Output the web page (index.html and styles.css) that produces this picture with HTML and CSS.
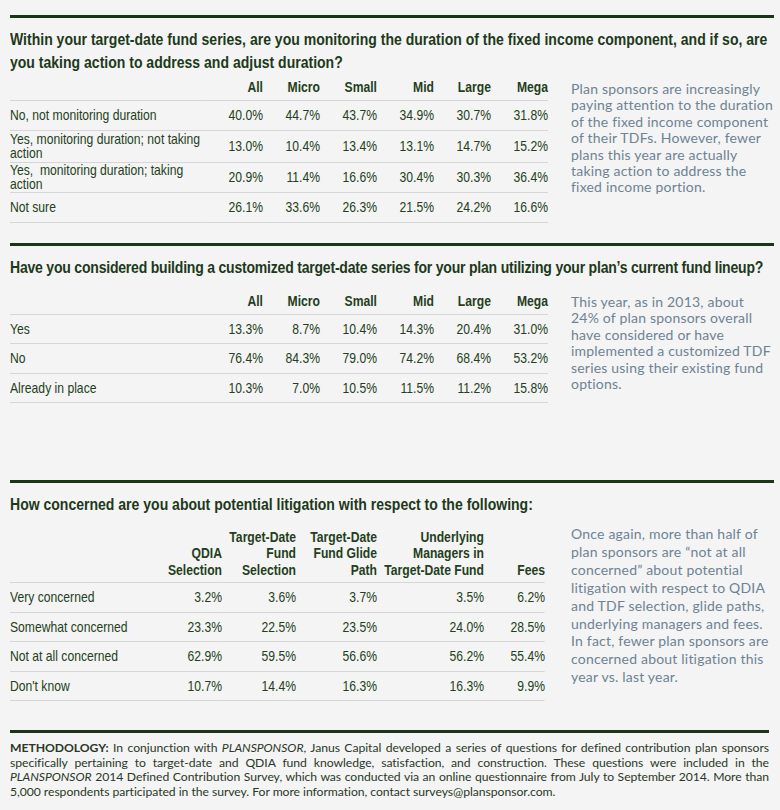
FILE: index.html
```html
<!DOCTYPE html>
<html lang="en">
<head>
<meta charset="utf-8">
<title>Target-date fund survey</title>
<link rel="stylesheet" href="styles.css">
</head>
<body>
<main class="page">

<section class="block block-1">
  <h2 class="question">Within your target-date fund series, are you monitoring the duration of the fixed income component, and if so, are you taking action to address and adjust duration?</h2>
  <div class="content">
    <div class="table-wrap wrap-6">
      <table class="data data-6 data-first">
        <colgroup><col class="col-label"><col class="col-v"><col class="col-v"><col class="col-v"><col class="col-v"><col class="col-v"><col class="col-v"></colgroup>
        <thead>
          <tr><th></th><th>All</th><th>Micro</th><th>Small</th><th>Mid</th><th>Large</th><th>Mega</th></tr>
        </thead>
        <tbody>
          <tr><td>No, not monitoring duration</td><td>40.0%</td><td>44.7%</td><td>43.7%</td><td>34.9%</td><td>30.7%</td><td>31.8%</td></tr>
          <tr class="two-a"><td>Yes, monitoring duration; not taking<br>action</td><td>13.0%</td><td>10.4%</td><td>13.4%</td><td>13.1%</td><td>14.7%</td><td>15.2%</td></tr>
          <tr class="two-b"><td>Yes,&nbsp; monitoring duration; taking<br>action</td><td>20.9%</td><td>11.4%</td><td>16.6%</td><td>30.4%</td><td>30.3%</td><td>36.4%</td></tr>
          <tr><td>Not sure</td><td>26.1%</td><td>33.6%</td><td>26.3%</td><td>21.5%</td><td>24.2%</td><td>16.6%</td></tr>
        </tbody>
      </table>
    </div>
    <p class="note note-1">Plan sponsors are increasingly<br>paying attention to the duration<br>of the fixed income component<br>of their TDFs. However, fewer<br>plans this year are actually<br>taking action to address the<br>fixed income portion.</p>
  </div>
</section>

<section class="block block-2">
  <h2 class="question question-tight">Have you considered building a customized target-date series for your plan utilizing your plan’s current fund lineup?</h2>
  <div class="content">
    <div class="table-wrap wrap-6">
      <table class="data data-6 data-second">
        <colgroup><col class="col-label"><col class="col-v"><col class="col-v"><col class="col-v"><col class="col-v"><col class="col-v"><col class="col-v"></colgroup>
        <thead>
          <tr><th></th><th>All</th><th>Micro</th><th>Small</th><th>Mid</th><th>Large</th><th>Mega</th></tr>
        </thead>
        <tbody>
          <tr><td>Yes</td><td>13.3%</td><td>8.7%</td><td>10.4%</td><td>14.3%</td><td>20.4%</td><td>31.0%</td></tr>
          <tr><td>No</td><td>76.4%</td><td>84.3%</td><td>79.0%</td><td>74.2%</td><td>68.4%</td><td>53.2%</td></tr>
          <tr><td>Already in place</td><td>10.3%</td><td>7.0%</td><td>10.5%</td><td>11.5%</td><td>11.2%</td><td>15.8%</td></tr>
        </tbody>
      </table>
    </div>
    <p class="note note-2">This year, as in 2013, about<br>24% of plan sponsors overall<br>have considered or have<br>implemented a customized TDF<br>series using their existing fund<br>options.</p>
  </div>
</section>

<section class="block block-3">
  <h2 class="question">How concerned are you about potential litigation with respect to the following:</h2>
  <div class="content">
    <div class="table-wrap wrap-5">
      <table class="data data-5">
        <colgroup><col class="c3-label"><col class="c3-qdia"><col class="c3-tdf"><col class="c3-glide"><col class="c3-under"><col class="c3-fees"></colgroup>
        <thead>
          <tr><th></th><th>QDIA<br>Selection</th><th>Target-Date<br>Fund<br>Selection</th><th>Target-Date<br>Fund Glide<br>Path</th><th>Underlying<br>Managers in<br>Target-Date Fund</th><th>Fees</th></tr>
        </thead>
        <tbody>
          <tr><td>Very concerned</td><td>3.2%</td><td>3.6%</td><td>3.7%</td><td>3.5%</td><td>6.2%</td></tr>
          <tr><td>Somewhat concerned</td><td>23.3%</td><td>22.5%</td><td>23.5%</td><td>24.0%</td><td>28.5%</td></tr>
          <tr><td>Not at all concerned</td><td>62.9%</td><td>59.5%</td><td>56.6%</td><td>56.2%</td><td>55.4%</td></tr>
          <tr><td>Don't know</td><td>10.7%</td><td>14.4%</td><td>16.3%</td><td>16.3%</td><td>9.9%</td></tr>
        </tbody>
      </table>
    </div>
    <p class="note note-3">Once again, more than half of<br>plan sponsors are “not at all<br>concerned” about potential<br>litigation with respect to QDIA<br>and TDF selection, glide paths,<br>underlying managers and fees.<br>In fact, fewer plan sponsors are<br>concerned about litigation this<br>year vs. last year.</p>
  </div>
</section>

<section class="block block-4">
  <p class="method"><strong>METHODOLOGY:</strong> In conjunction with <em>PLANSPONSOR</em>, Janus Capital developed a series of questions for defined contribution plan sponsors specifically pertaining to target-date and QDIA fund knowledge, satisfaction, and construction. These questions were included in the <em>PLANSPONSOR</em> 2014 Defined Contribution Survey, which was conducted via an online questionnaire from July to September 2014. More than 5,000 respondents participated in the survey. For more information, contact surveys@plansponsor.com.</p>
</section>

</main>
</body>
</html>
```

FILE: styles.css
```css
:root {
  /* horizontal squeeze that imitates the condensed face of the original */
  --sx: 0.85;
}

html, body {
  margin: 0;
  padding: 0;
  background: #f4f4f4;
}

.page {
  width: 764px;
  padding: 15px 6px 0 10px;
}

.block {
  border-top: 3px solid #1a3517;
}

.block-2 { margin-top: 20px; }
.block-3 { margin-top: 77px; }
.block-4 { margin-top: 29px; margin-right: 5px; }

.question {
  margin: 0;
  padding-top: 10px;
  width: calc(764px / var(--sx));
  transform: scaleX(var(--sx));
  transform-origin: 0 0;
  font-family: "Liberation Sans", Arial, sans-serif;
  font-weight: bold;
  font-size: 16.5px;
  line-height: 23px;
  color: #1d391a;
}

.question-tight {
  letter-spacing: -0.25px;
}

.content {
  display: flex;
  align-items: flex-start;
}

.table-wrap {
  flex: none;
}

.wrap-6 { width: 538px; }
.wrap-5 { width: 535px; }

.data {
  border-collapse: collapse;
  table-layout: fixed;
  transform: scaleX(var(--sx));
  transform-origin: 0 0;
  font-family: "Liberation Sans", Arial, sans-serif;
  font-size: 14.3px;
  color: #233e20;
}

.data-6 { width: calc(538px / var(--sx)); }
.data-5 { width: calc(535px / var(--sx)); margin-top: 12.5px; }
.data-first { margin-top: 5px; }
.data-second { margin-top: 14.5px; }

.col-label { width: calc(196px / var(--sx)); }
.col-v { width: calc(57px / var(--sx)); }

.c3-label { width: calc(152px / var(--sx)); }
.c3-qdia { width: calc(60px / var(--sx)); }
.c3-tdf { width: calc(74px / var(--sx)); }
.c3-glide { width: calc(81px / var(--sx)); }
.c3-under { width: calc(107px / var(--sx)); }
.c3-fees { width: calc(61px / var(--sx)); }

.data th {
  font-weight: bold;
  text-align: right;
  vertical-align: bottom;
  line-height: 16.5px;
  padding: 0 0 4px;
  border-bottom: 1px solid #d6d6d6;
  white-space: nowrap;
}

.data td {
  height: 29px;
  padding: 0;
  line-height: 14.5px;
  text-align: right;
  vertical-align: middle;
  border-bottom: 1px solid #d6d6d6;
  white-space: nowrap;
}

.data-second td { height: 28.5px; }
.data-5 td { height: 28.5px; }

.data td:first-child {
  text-align: left;
}

.data tr.two-a td {
  padding: 1px 0;
}

.note {
  margin: 0 0 0 23px;
  font-family: Lato, "Open Sans", sans-serif;
  font-size: 14px;
  letter-spacing: 0.2px;
  line-height: 16.4px;
  color: #6d8393;
  white-space: nowrap;
}

.note-1 { margin-top: 7px; }
.note-2 { margin-top: 15.5px; }
.note-3 { margin-top: 9px; margin-left: 26px; line-height: 17.9px; }

.method {
  margin: 0;
  padding-top: 8px;
  font-family: Lato, "Open Sans", sans-serif;
  font-size: 12.2px;
  letter-spacing: -0.05px;
  line-height: 14.7px;
  color: #2a3827;
  text-align: justify;
}

.method strong {
  font-weight: bold;
}
```
